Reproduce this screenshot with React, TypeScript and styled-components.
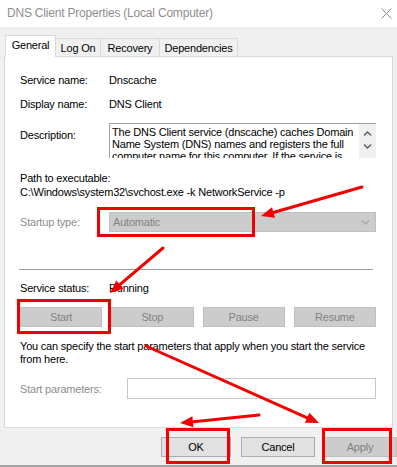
import React from 'react';
import styled, { createGlobalStyle } from 'styled-components';

const GlobalStyle = createGlobalStyle`
  html, body {
    margin: 0;
    padding: 0;
    background: #f0f0f0;
  }
  body {
    font-family: "Liberation Sans", Arial, sans-serif;
    font-size: 11px;
    letter-spacing: -0.2px;
    color: #000;
  }
  * {
    box-sizing: border-box;
  }
`;

const Window = styled.div`
  position: relative;
  width: 397px;
  height: 467px;
  background: #f0f0f0;
  border-bottom: 2px solid #a3a3a3;
  display: flex;
  flex-direction: column;
  overflow: hidden;
`;

const TitleBar = styled.div`
  height: 27px;
  flex: none;
  background: #ffffff;
  display: flex;
  align-items: center;
  justify-content: space-between;
  padding: 0 5px 1px 7px;
`;

const Title = styled.span`
  color: #8e8e8e;
  font-size: 12px;
`;

const Body = styled.div`
  padding: 8px 0 0 4px;
  display: flex;
  flex-direction: column;
`;

const TabStrip = styled.div`
  display: flex;
  align-items: flex-end;
  height: 21px;
  padding-left: 1px;
  position: relative;
  z-index: 1;
`;

const Tab = styled.div<{ $w: number; $active?: boolean }>`
  width: ${(p) => p.$w}px;
  height: ${(p) => (p.$active ? 22 : 18)}px;
  margin-bottom: ${(p) => (p.$active ? -1 : 0)}px;
  margin-left: -1px;
  background: ${(p) => (p.$active ? '#ffffff' : '#f0f0f0')};
  border: 1px solid #d9d9d9;
  border-bottom: none;
  display: flex;
  align-items: center;
  justify-content: center;
  padding-bottom: ${(p) => (p.$active ? 3 : 0)}px;
  &:first-child {
    margin-left: 0;
  }
`;

const Panel = styled.div`
  width: 389px;
  height: 372px;
  background: #ffffff;
  border: 1px solid #d9d9d9;
  padding: 0 16px 0 15px;
  display: flex;
  flex-direction: column;
`;

const FieldRow = styled.div<{ $top: number; $h?: number; $label?: number }>`
  margin-top: ${(p) => p.$top}px;
  height: ${(p) => p.$h ?? 20}px;
  display: grid;
  grid-template-columns: ${(p) => p.$label ?? 89}px 1fr;
  align-items: center;
`;

const Label = styled.span<{ $disabled?: boolean; $top?: boolean }>`
  color: ${(p) => (p.$disabled ? '#8d8d8d' : '#000')};
  align-self: ${(p) => (p.$top ? 'start' : 'center')};
  padding-top: ${(p) => (p.$top ? 5 : 0)}px;
  line-height: 14px;
`;

const TextLine = styled.div<{ $top?: number }>`
  margin-top: ${(p) => p.$top ?? 0}px;
  line-height: 14px;
  white-space: nowrap;
`;

const DescBox = styled.div`
  height: 35px;
  display: flex;
  border-top: 1px solid #a0a0a0;
  border-left: 1px solid #a0a0a0;
  overflow: hidden;
`;

const DescText = styled.div`
  flex: 1;
  padding: 2px 0 0 2px;
  line-height: 12px;
  white-space: nowrap;
  overflow: hidden;
`;

const ScrollBar = styled.div`
  width: 17px;
  flex: none;
  background: #f0f0f0;
  display: flex;
  flex-direction: column;
  align-items: center;
  padding-top: 7px;
  gap: 8px;
`;

const Select = styled.div`
  height: 20px;
  background: #cccccc;
  border: 1px solid #bfbfbf;
  color: #838383;
  display: flex;
  align-items: center;
  justify-content: space-between;
  padding: 0 5px 0 3px;
`;

const Separator = styled.div`
  margin-top: 37px;
  margin-right: 3px;
  margin-left: -1px;
  height: 1px;
  background: #a0a0a0;
`;

const ControlRow = styled.div`
  margin-top: 9px;
  display: grid;
  grid-template-columns: repeat(4, 1fr);
  column-gap: 9px;
`;

const Button = styled.div<{ $disabled?: boolean; $w?: number; $gap?: number }>`
  height: 20px;
  width: ${(p) => (p.$w ? `${p.$w}px` : 'auto')};
  margin-right: ${(p) => p.$gap ?? 0}px;
  flex: none;
  background: ${(p) => (p.$disabled ? '#cccccc' : '#e1e1e1')};
  border: 1px solid ${(p) => (p.$disabled ? '#bfbfbf' : '#adadad')};
  color: ${(p) => (p.$disabled ? '#838383' : '#000')};
  display: flex;
  align-items: center;
  justify-content: center;
`;

const Paragraph = styled.p`
  margin: 13px 0 0;
  line-height: 13px;
`;

const Input = styled.div`
  height: 21px;
  background: #ffffff;
  border: 1px solid #c8c8c8;
`;

const Footer = styled.div`
  margin-top: 9px;
  display: flex;
  justify-content: flex-end;
`;

const Overlay = styled.svg`
  position: absolute;
  left: 0;
  top: 0;
  pointer-events: none;
`;

const RED = '#f20000';

type Pt = [number, number];

function Arrow({ from, to }: { from: Pt; to: Pt }) {
  const dx = to[0] - from[0];
  const dy = to[1] - from[1];
  const len = Math.hypot(dx, dy);
  const ux = dx / len;
  const uy = dy / len;
  const L = 13;
  const W = 5.5;
  const bx = to[0] - ux * L;
  const by = to[1] - uy * L;
  const pts = [
    `${to[0]},${to[1]}`,
    `${bx - uy * W},${by + ux * W}`,
    `${bx + uy * W},${by - ux * W}`,
  ].join(' ');
  return (
    <g>
      <line x1={from[0]} y1={from[1]} x2={bx + ux * 2} y2={by + uy * 2} stroke={RED} strokeWidth={3} strokeLinecap="round" />
      <polygon points={pts} fill={RED} />
    </g>
  );
}

function Box({ x1, y1, x2, y2 }: { x1: number; y1: number; x2: number; y2: number }) {
  return <rect x={x1 + 1.5} y={y1 + 1.5} width={x2 - x1 - 3} height={y2 - y1 - 3} fill="none" stroke={RED} strokeWidth={3} />;
}

const Chevron = ({ up, color = '#5a5a5a' }: { up?: boolean; color?: string }) => (
  <svg width="9" height="5" viewBox="0 0 9 5">
    <path d={up ? 'M1 4.5 L4.5 1 L8 4.5' : 'M1 0.5 L4.5 4 L8 0.5'} fill="none" stroke={color} strokeWidth="1.3" />
  </svg>
);

export default function App() {
  return (
    <>
      <GlobalStyle />
      <Window>
        <TitleBar>
          <Title>DNS Client Properties (Local Computer)</Title>
          <svg width="11" height="11" viewBox="0 0 11 11">
            <path d="M0.5 0.5 L10.5 10.5 M10.5 0.5 L0.5 10.5" stroke="#8a8a8a" strokeWidth="1" />
          </svg>
        </TitleBar>
        <Body>
          <TabStrip>
            <Tab $w={51} $active>General</Tab>
            <Tab $w={46}>Log On</Tab>
            <Tab $w={60}>Recovery</Tab>
            <Tab $w={79}>Dependencies</Tab>
          </TabStrip>
          <Panel>
            <FieldRow $top={13}>
              <Label>Service name:</Label>
              <span>Dnscache</span>
            </FieldRow>
            <FieldRow $top={4}>
              <Label>Display name:</Label>
              <span>DNS Client</span>
            </FieldRow>
            <FieldRow $top={9} $h={35}>
              <Label $top>Description:</Label>
              <DescBox>
                <DescText>
                  <div>The DNS Client service (dnscache) caches Domain</div>
                  <div>Name System (DNS) names and registers the full</div>
                  <div>computer name for this computer. If the service is</div>
                </DescText>
                <ScrollBar>
                  <Chevron up />
                  <Chevron />
                </ScrollBar>
              </DescBox>
            </FieldRow>
            <TextLine $top={13}>Path to executable:</TextLine>
            <TextLine>C:\Windows\system32\svchost.exe -k NetworkService -p</TextLine>
            <FieldRow $top={13}>
              <Label $disabled>Startup type:</Label>
              <Select>
                <span>Automatic</span>
                <Chevron color="#a8a8a8" />
              </Select>
            </FieldRow>
            <Separator />
            <FieldRow $top={8}>
              <Label>Service status:</Label>
              <span>Running</span>
            </FieldRow>
            <ControlRow>
              <Button $disabled>Start</Button>
              <Button $disabled>Stop</Button>
              <Button $disabled>Pause</Button>
              <Button $disabled>Resume</Button>
            </ControlRow>
            <Paragraph>
              You can specify the start parameters that apply when you start the service
              <br />
              from here.
            </Paragraph>
            <FieldRow $top={12} $h={21} $label={107}>
              <Label $disabled>Start parameters:</Label>
              <Input />
            </FieldRow>
          </Panel>
          <Footer>
            <Button $w={70} $gap={10}>OK</Button>
            <Button $w={74} $gap={8}>Cancel</Button>
            <Button $w={74} $disabled>Apply</Button>
          </Footer>
        </Body>
        <Overlay width={397} height={467} viewBox="0 0 397 467">
          <Box x1={97} y1={207} x2={255} y2={237} />
          <Box x1={17} y1={299} x2={111} y2={334} />
          <Box x1={166} y1={428} x2={230} y2={464} />
          <Box x1={322} y1={428} x2={392} y2={464} />
          <Arrow from={[362, 187]} to={[261, 216]} />
          <Arrow from={[163, 248]} to={[110, 293]} />
          <Arrow from={[146, 346]} to={[319, 423]} />
          <Arrow from={[259, 415]} to={[180, 423]} />
        </Overlay>
      </Window>
    </>
  );
}
